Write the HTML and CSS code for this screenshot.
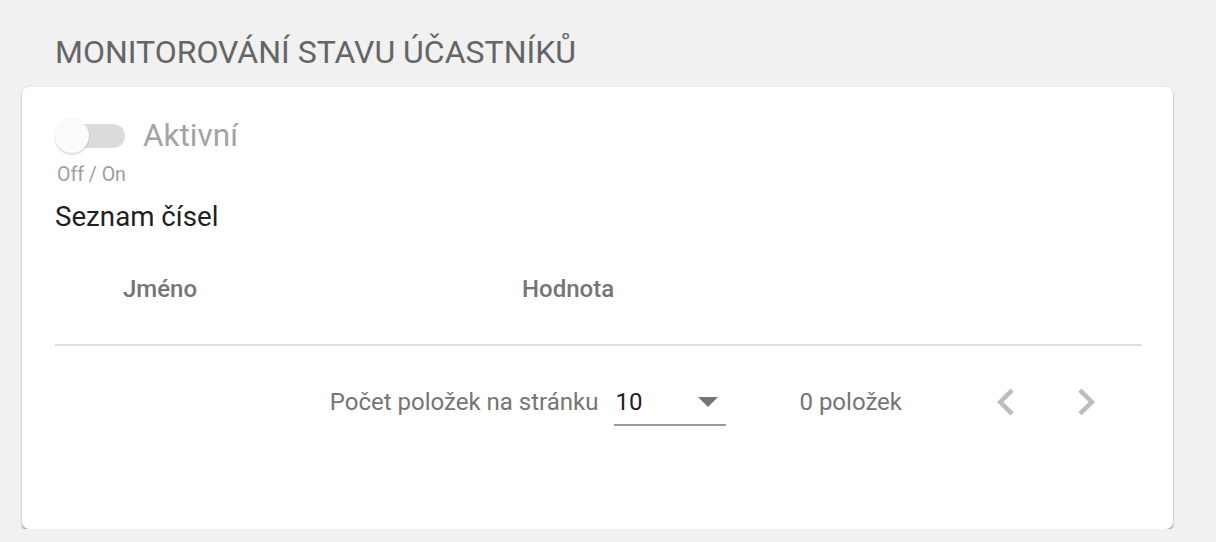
FILE: index.html
```html
<!DOCTYPE html>
<html lang="cs">
<head>
<meta charset="utf-8">
<title>Monitorování stavu účastníků</title>
<link rel="stylesheet" href="styles.css">
</head>
<body>
<h1 class="page-title">MONITOROVÁNÍ STAVU ÚČASTNÍKŮ</h1>
<section class="card">
  <div class="toggle-row">
    <span class="toggle">
      <span class="toggle-track"></span>
      <span class="toggle-thumb"></span>
    </span>
    <span class="toggle-label">Aktivní</span>
  </div>
  <div class="hint">Off / On</div>
  <h2 class="section-title">Seznam čísel</h2>
  <div class="table-header">
    <div class="th th-name">Jméno</div>
    <div class="th th-value">Hodnota</div>
  </div>
  <div class="paginator">
    <span class="page-size-label">Počet položek na stránku</span>
    <span class="select">
      <span class="select-value">10</span>
      <span class="select-arrow"></span>
    </span>
    <span class="range-label">0 položek</span>
    <span class="nav-btn">
      <svg viewBox="0 0 24 24" width="54" height="54"><path d="M15.41 7.41L14 6l-6 6 6 6 1.41-1.41L10.83 12z"/></svg>
    </span>
    <span class="nav-btn">
      <svg viewBox="0 0 24 24" width="54" height="54"><path d="M10 6L8.59 7.41 13.17 12l-4.58 4.59L10 18l6-6z"/></svg>
    </span>
  </div>
</section>
</body>
</html>
```

FILE: styles.css
```css
html, body {
  margin: 0;
  padding: 0;
}
body {
  background: #f1f1f1;
  font-family: Roboto, "Liberation Sans", Arial, sans-serif;
  padding: 34px 43px 0 22px;
}
.page-title {
  margin: 0 0 17px 33px;
  font-size: 32px;
  line-height: 36px;
  font-weight: 400;
  color: #656565;
}
.card {
  background: #fff;
  border-radius: 7px;
  box-shadow: 0 2px 2px rgba(0,0,0,0.35), 0 0 3px rgba(0,0,0,0.08);
  padding: 32px 31px 71px 33px;
}
.toggle-row {
  display: flex;
  align-items: center;
  height: 34px;
}
.toggle {
  position: relative;
  width: 70px;
  height: 34px;
  flex: none;
}
.toggle-track {
  position: absolute;
  left: 2px;
  top: 5px;
  width: 68px;
  height: 24px;
  border-radius: 12px;
  background: #dcdcdc;
}
.toggle-thumb {
  position: absolute;
  left: 0;
  top: 0;
  width: 34px;
  height: 34px;
  border-radius: 50%;
  background: #fbfbfb;
  box-shadow: 0 2px 2px rgba(0,0,0,0.12), 0 0 2px rgba(0,0,0,0.08);
}
.toggle-label {
  margin-left: 18px;
  font-size: 31.5px;
  line-height: 34px;
  color: #a3a3a3;
}
.hint {
  margin: 10px 0 0 2px;
  font-size: 19.5px;
  line-height: 24px;
  color: #9e9e9e;
}
.section-title {
  margin: 14px 0 0 0;
  font-size: 27.7px;
  line-height: 32px;
  font-weight: 400;
  color: #1f1f1f;
}
.table-header {
  display: grid;
  grid-template-columns: 467px 1fr;
  align-items: center;
  height: 111px;
  border-bottom: 2px solid #e0e0e0;
}
.th {
  font-size: 24px;
  font-weight: 500;
  color: #757575;
}
.th-name {
  padding-left: 68px;
}
.paginator {
  display: flex;
  justify-content: flex-end;
  align-items: center;
  height: 112px;
  padding-right: 29px;
  font-size: 24px;
  color: #757575;
}
.page-size-label {
  line-height: 28px;
}
.select {
  margin-left: 16px;
  width: 112px;
  display: flex;
  align-items: center;
  justify-content: space-between;
  padding: 9px 0 8px 0;
  border-bottom: 2px solid #9a9a9a;
}
.select-value {
  line-height: 28px;
  color: #212121;
  padding-left: 1px;
}
.select-arrow {
  width: 0;
  height: 0;
  border-left: 10px solid transparent;
  border-right: 10px solid transparent;
  border-top: 10px solid #757575;
  margin-right: 8px;
}
.range-label {
  margin-left: 73px;
  line-height: 28px;
}
.nav-btn {
  display: flex;
  margin-left: 77px;
  fill: #bdbdbd;
}
.nav-btn + .nav-btn {
  margin-left: 26px;
}
```
